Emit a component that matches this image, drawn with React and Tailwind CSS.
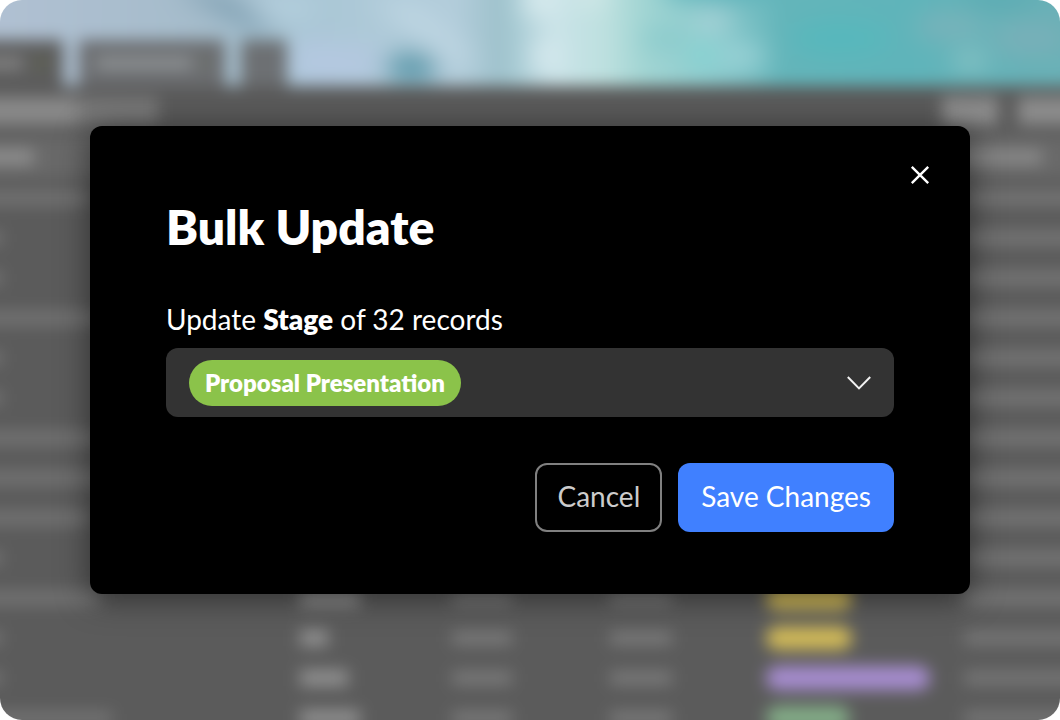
const rows = [
  { name: "w-[190px]", contact: "w-14", tone: "bg-[#d0b959]", pill: "w-[86px]", note: "w-[164px]" },
  { name: "w-[102px]", contact: "w-8", tone: "bg-[#a78dd0]", pill: "w-[164px]", note: "w-[196px]" },
  { name: "w-[102px]", contact: "w-12", tone: "bg-[#d0b959]", pill: "w-[86px]", note: "w-[164px]" },
  { name: "w-[200px]", contact: "w-14", tone: "bg-[#83ac87]", pill: "w-[84px]", note: "w-[196px]" },
  { name: "w-[102px]", contact: "w-8", tone: "bg-[#d0b959]", pill: "w-[86px]", note: "w-[196px]" },
  { name: "w-[102px]", contact: "w-12", tone: "bg-[#d0b959]", pill: "w-[86px]", note: "w-[196px]" },
  { name: "w-[200px]", contact: "w-14", tone: "bg-[#a78dd0]", pill: "w-[164px]", note: "w-[196px]" },
  { name: "w-[210px]", contact: "w-8", tone: "bg-[#d0b959]", pill: "w-[86px]", note: "w-[196px]" },
  { name: "w-[190px]", contact: "w-12", tone: "bg-[#83ac87]", pill: "w-[84px]", note: "w-[196px]" },
  { name: "w-[102px]", contact: "w-14", tone: "bg-[#d0b959]", pill: "w-[86px]", note: "w-[196px]" },
  { name: "w-[200px]", contact: "w-[60px]", tone: "bg-[#d0b959]", pill: "w-[86px]", note: "w-[196px]" },
  { name: "w-[102px]", contact: "w-7", tone: "bg-[#d0b959]", pill: "w-[86px]", note: "w-[196px]" },
  { name: "w-[102px]", contact: "w-12", tone: "bg-[#a78dd0]", pill: "w-[164px]", note: "w-[196px]" },
  { name: "w-[212px]", contact: "w-[60px]", tone: "bg-[#83ac87]", pill: "w-[84px]", note: "w-[196px]" },
  { name: "w-[102px]", contact: "w-12", tone: "bg-[#83ac87]", pill: "w-[84px]", note: "w-[196px]" },
];

const stages = ["Proposal Presentation", "Qualification", "Negotiation", "Closed Won"];

function CoverPhoto() {
  return (
    <svg className="absolute inset-0 size-full" viewBox="0 0 1260 188" preserveAspectRatio="none">
      <defs>
        <linearGradient id="sea" x1="0" x2="1" y1="0" y2="0">
          <stop offset="0.08" stopColor="#b0c0d2" />
          <stop offset="0.24" stopColor="#a5bccb" />
          <stop offset="0.32" stopColor="#a9c6d5" />
          <stop offset="0.44" stopColor="#b3cddb" />
          <stop offset="0.475" stopColor="#9fc2cc" />
          <stop offset="0.49" stopColor="#a8cbd4" />
          <stop offset="0.52" stopColor="#cae3e8" />
          <stop offset="0.56" stopColor="#bde0df" />
          <stop offset="0.59" stopColor="#a2d5d3" />
          <stop offset="0.64" stopColor="#8eccce" />
          <stop offset="0.67" stopColor="#7cc1c5" />
          <stop offset="0.7" stopColor="#64b5ba" />
          <stop offset="0.8" stopColor="#5fb4ba" />
          <stop offset="0.94" stopColor="#6bb0b6" />
        </linearGradient>
        <filter id="soft" x="-50%" y="-50%" width="200%" height="200%">
          <feGaussianBlur stdDeviation="10" />
        </filter>
      </defs>
      <rect width="1260" height="188" fill="url(#sea)" />
      <g filter="url(#soft)">
        <path d="M270 85L330 98L380 140L350 132Z" fill="#7d9eb0" />
        <path d="M355 95L420 105L400 120L370 115Z" fill="#b7d2e0" />
        <path d="M395 140L480 150L470 185L390 185Z" fill="#b4c8e0" />
        <ellipse cx="512" cy="170" rx="26" ry="16" fill="#5d99aa" />
        <path d="M470 100L520 105L580 165L550 168Z" fill="#bdd5e2" />
        <ellipse cx="640" cy="100" rx="18" ry="20" fill="#d8ebee" />
        <ellipse cx="646" cy="158" rx="14" ry="16" fill="#d8eaef" />
        <ellipse cx="690" cy="96" rx="16" ry="12" fill="#d4e9e8" />
        <ellipse cx="765" cy="140" rx="24" ry="12" fill="#8acbcc" />
        <ellipse cx="813" cy="123" rx="18" ry="9" fill="#b0d4da" />
        <ellipse cx="838" cy="158" rx="28" ry="12" fill="#9bd3d7" />
        <ellipse cx="803" cy="156" rx="16" ry="10" fill="#84d6d4" />
        <ellipse cx="820" cy="90" rx="60" ry="12" fill="#59b0b8" />
        <ellipse cx="940" cy="140" rx="50" ry="18" fill="#57b8bc" />
        <ellipse cx="1050" cy="128" rx="36" ry="14" fill="#79b3ba" />
        <ellipse cx="1130" cy="140" rx="40" ry="18" fill="#78b0b8" />
        <ellipse cx="1070" cy="163" rx="18" ry="10" fill="#8cc4c6" />
        <ellipse cx="1100" cy="100" rx="40" ry="8" fill="#59a9b0" />
      </g>
    </svg>
  );
}

function RecordsBackdrop() {
  return (
    <div aria-hidden="true" className="absolute -inset-[100px] bg-[#5b5b5b] blur-[8px]">
      <div className="relative flex h-[186px] items-end">
        <CoverPhoto />
        <div className="relative flex h-[46px] w-full gap-4">
          <div className="flex w-[163px] items-center justify-end gap-3 bg-[#5d5d5d] pr-4">
            <span className="h-3 w-20 bg-[#858585]" />
            <span className="size-3 bg-[#5f6350]" />
          </div>
          <div className="flex w-[146px] items-center justify-center gap-2 bg-[#6c6e71]">
            <span className="h-3 w-24 bg-[#8f9395]" />
            <span className="size-2 bg-[#6e7568]" />
          </div>
          <div className="w-[46px] bg-[#6d7073]" />
        </div>
      </div>
      <div className="flex h-[50px] items-center justify-between bg-[#5a5a5a]">
        <div className="flex h-7 w-[258px] bg-[#777777]">
          <span className="h-full w-[178px] bg-[#898989]" />
        </div>
        <div className="flex h-7 gap-5">
          <span className="w-[56px] bg-[#8c8c8c]" />
          <span className="w-[142px] bg-[#8c8c8c]" />
        </div>
      </div>
      <div className="flex h-[42px] items-center justify-between bg-[#696969]">
        <span className="h-3.5 w-[134px] bg-[#929292]" />
        <span className="mr-[118px] h-3.5 w-[86px] bg-[#8c8c8c]" />
      </div>
      {rows.map((row, index) => (
        <div key={index} className="flex h-10 items-center">
          <div className="w-[400px]">
            <span className={`block h-3 bg-[#777777] ${row.name}`} />
          </div>
          <div className="w-[152px]">
            <span className={`block h-4 bg-[#929292] ${row.contact}`} />
          </div>
          <div className="w-[158px]">
            <span className="block h-3 w-[60px] bg-[#7e7e7e]" />
          </div>
          <div className="w-[156px]">
            <span className="block h-3 w-[62px] bg-[#7e7e7e]" />
          </div>
          <div className="w-[198px]">
            <span className={`block h-6 rounded-full ${row.tone} ${row.pill}`} />
          </div>
          <span className={`block h-3.5 bg-[#777777] ${row.note}`} />
        </div>
      ))}
    </div>
  );
}

export default function App() {
  return (
    <div className="bg-white font-[Avenir,Lato,sans-serif]">
      <main className="relative isolate grid min-h-screen place-items-center overflow-hidden rounded-[22px] px-6">
        <RecordsBackdrop />
        <section
          role="dialog"
          aria-modal="true"
          aria-labelledby="bulk-title"
          className="relative w-full max-w-[880px] rounded-xl bg-black px-10 pt-[31px] pb-[62px] text-white shadow-[0_4px_32px_rgba(0,0,0,0.5)]"
        >
          <div className="flex justify-end">
            <button type="button" aria-label="Close" className="-mr-2 grid size-9 place-items-center">
              <svg viewBox="0 0 20 20" className="size-5" fill="none" stroke="currentColor" strokeWidth="2.4">
                <path d="M1.8 1.8L18.2 18.2M18.2 1.8L1.8 18.2" />
              </svg>
            </button>
          </div>
          <form className="px-9" onSubmit={(event) => event.preventDefault()}>
            <h1 id="bulk-title" className="pt-1 text-[48px] leading-[60px] font-extrabold">
              Bulk Update
            </h1>
            <label htmlFor="stage" className="mt-[42px] block text-[28px] leading-10">
              Update <strong className="font-extrabold">Stage</strong> of 32 records
            </label>
            <label className="mt-[9px] flex h-[69px] items-center justify-between rounded-xl bg-[#333333] px-[23px]">
              <select
                id="stage"
                defaultValue={stages[0]}
                className="h-[46px] appearance-none rounded-full bg-[#8bc34a] px-4 text-[24px] font-extrabold field-sizing-content"
              >
                {stages.map((stage) => (
                  <option key={stage}>{stage}</option>
                ))}
              </select>
              <svg viewBox="0 0 24 14" className="h-3.5 w-6" fill="none" stroke="#f2f2f2" strokeWidth="2">
                <path d="M0.8 1L12 12.4L23.2 1" />
              </svg>
            </label>
            <div className="mt-[46px] flex justify-end gap-4 text-[28px]">
              <button type="button" className="h-[69px] rounded-xl border-2 border-[#808080] px-5 pb-1 text-[#cccccc]">
                Cancel
              </button>
              <button type="submit" className="h-[69px] rounded-xl bg-[#4080ff] px-[23px] pb-1">
                Save Changes
              </button>
            </div>
          </form>
        </section>
      </main>
    </div>
  );
}
